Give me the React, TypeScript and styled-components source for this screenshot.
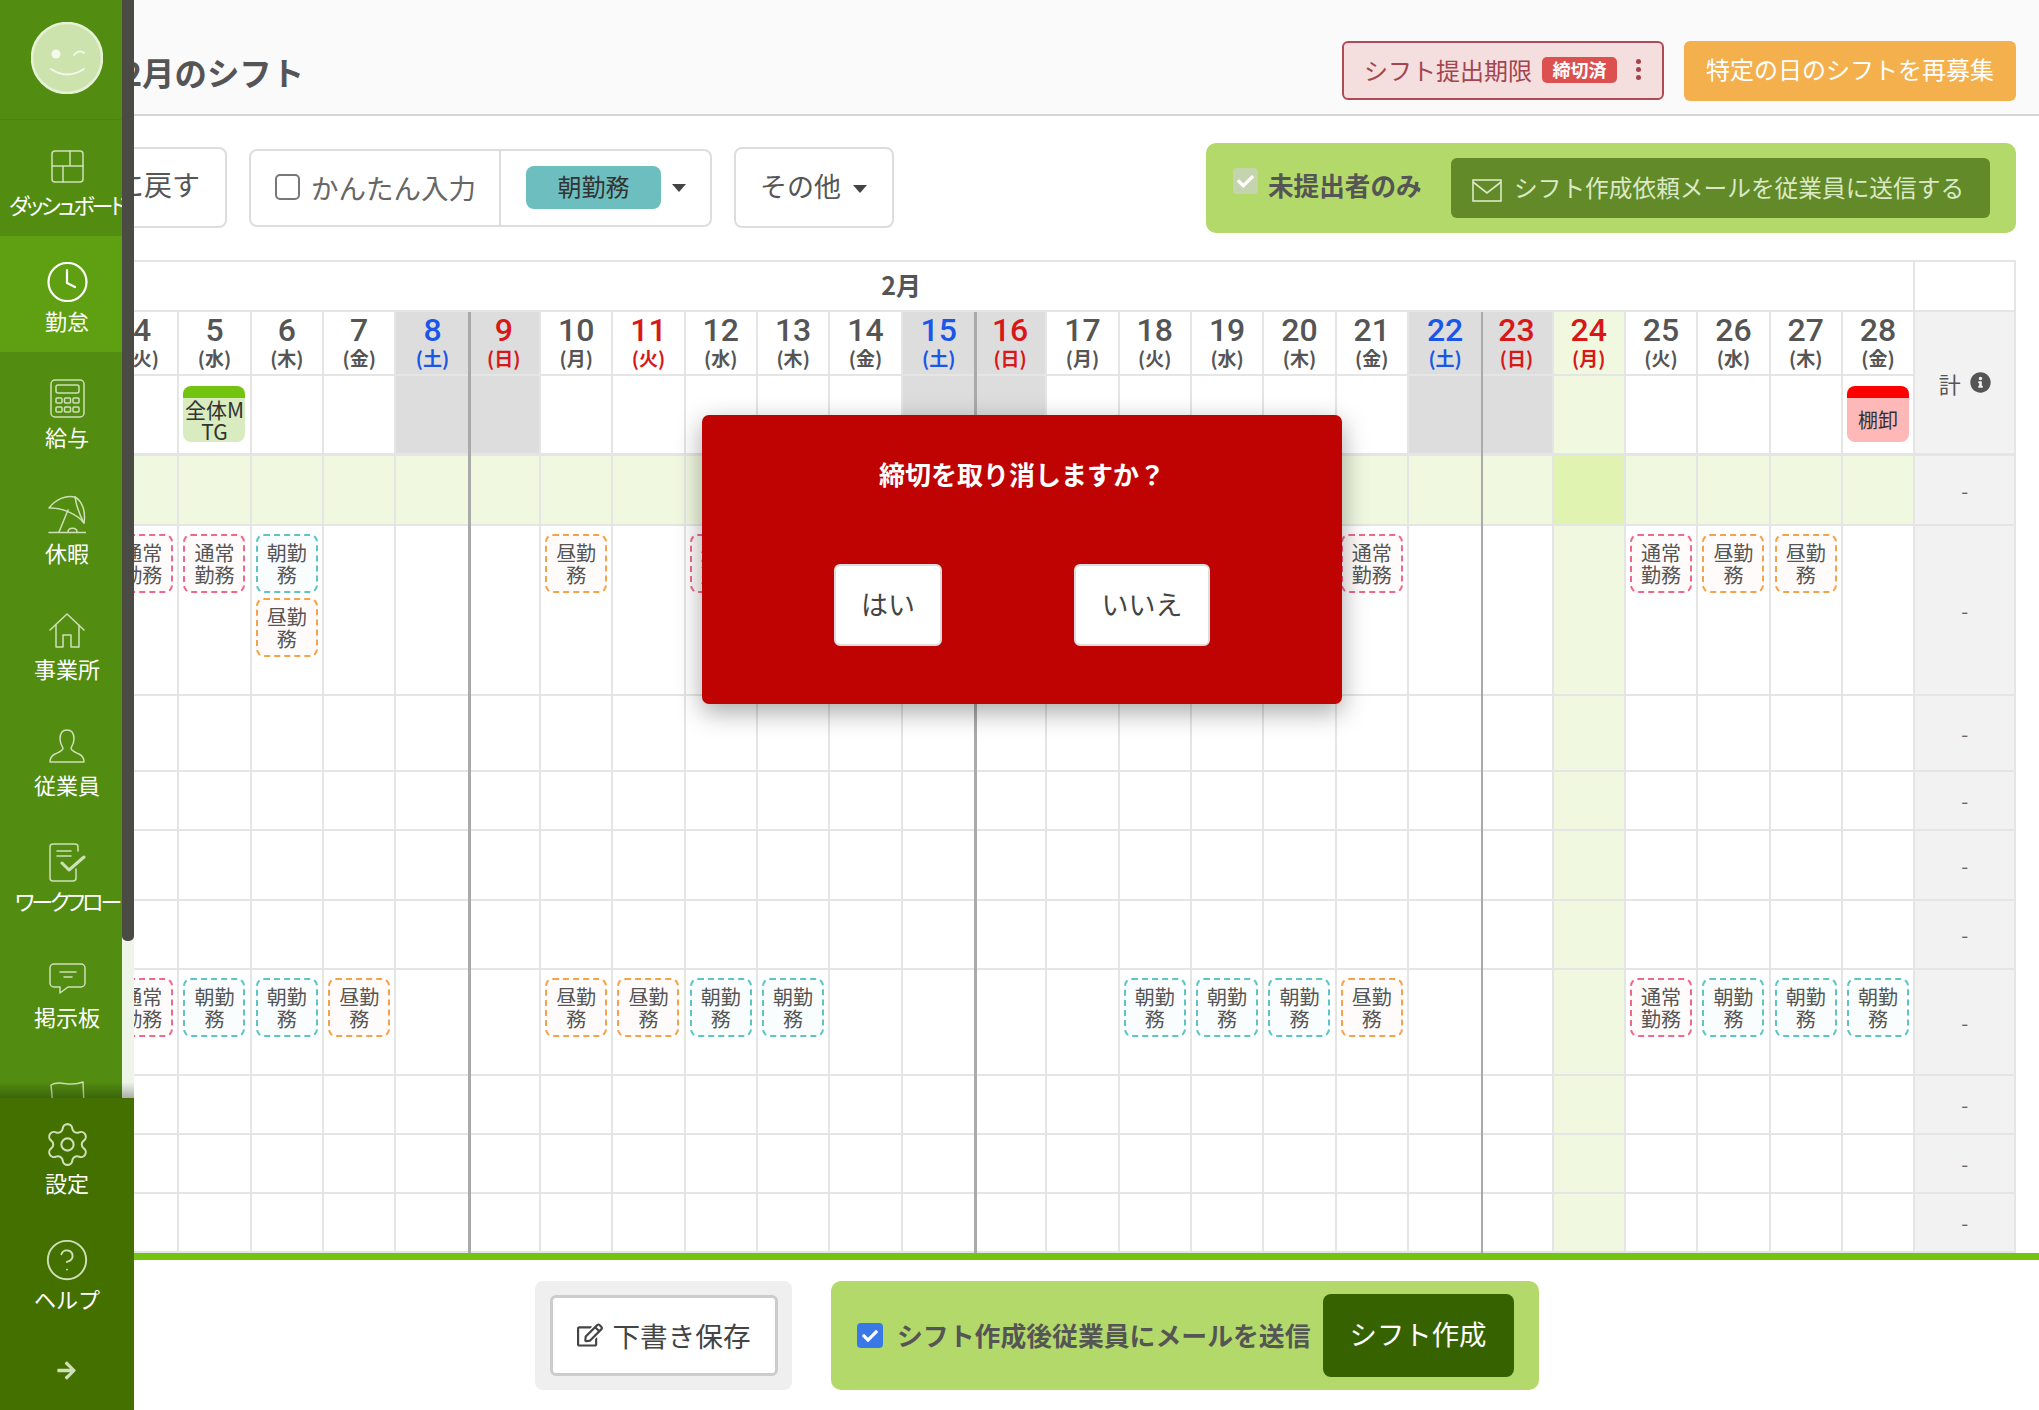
import React from "react";
import styled, { createGlobalStyle } from "styled-components";
import { Settings, CircleHelp } from "lucide-react";
import { FaArrowRight, FaCheck, FaInfoCircle, FaRegEdit } from "react-icons/fa";

const Global = createGlobalStyle`
  html, body { margin: 0; padding: 0; overflow: hidden; background: #fff; }
  * { box-sizing: border-box; }
  body { font-family: "Noto Sans CJK JP", "Liberation Sans", sans-serif; color: #555; }
`;

const Page = styled.div`
  position: relative;
  display: flex;
  width: 2039px;
  height: 1410px;
  overflow: hidden;
`;

/* ---------- sidebar ---------- */
const Sidebar = styled.aside`
  flex: 0 0 134px;
  display: flex;
  flex-direction: column;
  height: 1410px;
  z-index: 3;
`;
const SideScroll = styled.div`
  position: relative;
  height: 1098px;
  overflow: hidden;
`;
const NavColumn = styled.nav`
  width: 134px;
  background: #528c10;
`;
const Track = styled.div`
  position: absolute;
  right: 0;
  top: 0;
  bottom: 0;
  width: 12px;
  background: #eef5e8;
`;
const Thumb = styled.div`
  height: 941px;
  background: #4a4b44;
  border-radius: 0 0 5px 5px;
`;
const LogoBox = styled.div`
  height: 120px;
  padding-top: 22px;
  display: flex;
  justify-content: center;
  border-bottom: 1px solid #4c840e;
`;
const NavItem = styled.div<{ $active?: boolean }>`
  height: 116px;
  padding-top: 26px;
  display: flex;
  flex-direction: column;
  align-items: center;
  background: ${(p) => (p.$active ? "#5fa013" : "transparent")};
  color: ${(p) => (p.$active ? "#fff" : "#cfe0b8")};
`;
const IconBox = styled.div`
  height: 40px;
  width: 100%;
  display: flex;
  align-items: center;
  justify-content: center;
`;
const NavLabel = styled.div<{ $tight?: boolean }>`
  margin-top: 5px;
  height: 26px;
  line-height: 26px;
  font-size: 22px;
  color: #fff;
  white-space: nowrap;
  font-feature-settings: ${(p) => (p.$tight ? '"palt"' : "normal")};
  letter-spacing: ${(p) => (p.$tight ? "-3px" : "0")};
`;
const BottomNav = styled.div`
  position: relative;
  flex: 1;
  background: #447000;
  width: 134px;
  &::before {
    content: "";
    position: absolute;
    left: 0;
    right: 0;
    top: -16px;
    height: 16px;
    background: linear-gradient(to bottom, rgba(0, 0, 0, 0), rgba(0, 0, 0, 0.28));
  }
`;
const ArrowRow = styled.div`
  height: 80px;
  display: flex;
  align-items: center;
  justify-content: center;
  padding-right: 2px;
  color: #cfe0b8;
`;

const Svg = styled.svg`
  display: block;
  fill: none;
  stroke: currentColor;
  stroke-width: 1.5;
  stroke-linejoin: round;
  stroke-linecap: round;
`;

const icons: Record<string, React.ReactNode> = {
  dash: (
    <Svg width="33" height="33" viewBox="0 0 33 33">
      <rect x="1" y="1" width="31" height="31" rx="3" />
      <path d="M1 16H32M19 1V16M12 16V32" />
    </Svg>
  ),
  clock: (
    <Svg width="41" height="40" viewBox="0 0 41 40" style={{ strokeWidth: 2.2 }}>
      <circle cx="20.5" cy="20" r="19" />
      <path d="M20 8V21L28 25" />
    </Svg>
  ),
  calc: (
    <Svg width="35" height="39" viewBox="0 0 35 39">
      <rect x="1" y="1" width="33" height="37" rx="4" />
      <rect x="6" y="6" width="23" height="8" rx="2" />
      <rect x="6" y="19" width="6" height="5" rx="1" />
      <rect x="14.5" y="19" width="6" height="5" rx="1" />
      <rect x="23" y="19" width="6" height="5" rx="1" />
      <rect x="6" y="28" width="6" height="5" rx="1" />
      <rect x="14.5" y="28" width="6" height="5" rx="1" />
      <rect x="23" y="28" width="6" height="5" rx="1" />
    </Svg>
  ),
  umbrella: (
    <Svg width="38" height="39" viewBox="0 0 38 39">
      <path d="M1 13C8 4 18 0 27 2C34 6 38 16 36 28C30 20 14 12 1 13Z" />
      <path d="M27 2C28 8 29 15 36 28M20 15L11 37" />
      <path d="M20 37C20 32 29 32 29 37M1 37.5H38" />
    </Svg>
  ),
  house: (
    <Svg width="36" height="35" viewBox="0 0 36 35">
      <path d="M1 17L18 1L35 17M7 12V34H14V22H22V34H30V12" />
    </Svg>
  ),
  person: (
    <Svg width="36" height="34" viewBox="0 0 36 34">
      <path d="M18 1C12 1 11 6 11 10C11 14 13 17 14 19C14 22 10 23 6 25C2 27 1 30 1 33H35C35 30 34 27 30 25C26 23 22 22 22 19C23 17 25 14 25 10C25 6 24 1 18 1Z" />
    </Svg>
  ),
  flow: (
    <Svg width="38" height="39" viewBox="0 0 38 39">
      <path d="M30 8V4A3 3 0 0 0 27 1H5A3 3 0 0 0 2 4V35A3 3 0 0 0 5 38H25A3 3 0 0 0 28 35V26" />
      <path d="M9 8H23M9 13H23" />
      <path d="M14 20L21 27L36 14" style={{ strokeWidth: 3 }} />
    </Svg>
  ),
  bubble: (
    <Svg width="37" height="31" viewBox="0 0 37 31">
      <path d="M5 1H32A4 4 0 0 1 36 5V20A4 4 0 0 1 32 24H19L11 30V24H5A4 4 0 0 1 1 20V5A4 4 0 0 1 5 1Z" />
      <path d="M11 9H27M15 14H23" />
    </Svg>
  ),
  flag: (
    <Svg width="35" height="30" viewBox="0 0 35 30" style={{ marginTop: 2 }}>
      <path d="M1 5C10 -1 18 8 33 2L34 24C20 29 12 20 3 26Z" />
    </Svg>
  ),
};

const Smile = () => (
  <svg width="72" height="72" viewBox="0 0 72 72">
    <circle cx="36" cy="36" r="35" fill="#cde3ae" stroke="#e6f1d6" strokeWidth="2.5" />
    <circle cx="25" cy="32" r="4.5" fill="#f4f9ec" />
    <path d="M43 33Q48 27 53 31" fill="none" stroke="#f4f9ec" strokeWidth="1.8" strokeLinecap="round" />
    <path d="M20 47Q36 58 53 47" fill="none" stroke="#f4f9ec" strokeWidth="1.8" strokeLinecap="round" />
  </svg>
);

/* ---------- main ---------- */
const Main = styled.main`
  flex: 1;
  min-width: 0;
  height: 1410px;
  display: flex;
  flex-direction: column;
  overflow: hidden;
`;
const Header = styled.header`
  flex: 0 0 116px;
  display: flex;
  align-items: flex-start;
  padding: 41px 23px 0 0;
  background: #fafafa;
  border-bottom: 2px solid #d6d6d6;
`;
const Title = styled.h1`
  margin: 1px auto 0 -11px;
  font-size: 32.4px;
  line-height: 60px;
  font-weight: 700;
  color: #555;
  white-space: nowrap;
`;
const DeadlineButton = styled.div`
  width: 322px;
  height: 59px;
  display: flex;
  align-items: center;
  padding: 0 0 2px 20px;
  background: #f4dede;
  border: 2px solid #b04a55;
  border-radius: 6px;
  font-size: 24px;
  color: #a4444f;
  white-space: nowrap;
`;
const Badge = styled.span`
  width: 75px;
  height: 26px;
  margin-left: 10px;
  background: #dd5050;
  border-radius: 5px;
  color: #fff;
  font-size: 18px;
  font-weight: 700;
  line-height: 25px;
  text-align: center;
`;
const Dots = styled.span`
  margin-left: 19px;
  display: flex;
  flex-direction: column;
  gap: 3px;
  & > i {
    width: 5px;
    height: 5px;
    border-radius: 50%;
    background: #a4444f;
  }
`;
const OrangeButton = styled.div`
  width: 332px;
  height: 60px;
  margin-left: 20px;
  background: #f5b04e;
  border-radius: 6px;
  color: #fff;
  font-size: 24px;
  line-height: 56px;
  text-align: center;
  white-space: nowrap;
`;
const Toolbar = styled.div`
  flex: 0 0 144px;
  display: flex;
  align-items: center;
  padding-right: 23px;
  gap: 22px;
`;
const BackButton = styled.div`
  width: 127px;
  height: 81px;
  margin: 0 0 1px -34px;
  padding-right: 25px;
  border: 2px solid #ddd;
  border-radius: 8px;
  font-size: 28px;
  line-height: 71px;
  text-align: right;
  color: #555;
  white-space: nowrap;
`;
const InputGroup = styled.div`
  width: 463px;
  height: 78px;
  display: flex;
  align-items: center;
  border: 2px solid #ddd;
  border-radius: 8px;
`;
const EasyInput = styled.div`
  width: 250px;
  height: 100%;
  display: flex;
  align-items: center;
  padding: 0 0 2px 24px;
  gap: 11px;
  border-right: 2px solid #ddd;
  font-size: 27.5px;
  color: #666;
  white-space: nowrap;
`;
const EmptyCheck = styled.span`
  width: 25px;
  height: 26px;
  border: 2px solid #777;
  border-radius: 5px;
  background: #fff;
`;
const ShiftTag = styled.span`
  width: 135px;
  height: 43px;
  margin: 0 0 1px 25px;
  background: #6dbfbf;
  border-radius: 8px;
  color: #333;
  font-size: 24px;
  line-height: 39px;
  text-align: center;
`;
const Caret = styled.span<{ $left: number; $top?: number }>`
  margin-left: ${(p) => p.$left}px;
  margin-top: ${(p) => p.$top ?? 0}px;
  width: 0;
  height: 0;
  border-left: 7px solid transparent;
  border-right: 7px solid transparent;
  border-top: 8px solid #444;
`;
const OtherButton = styled.div`
  width: 160px;
  height: 81px;
  margin-bottom: 1px;
  display: flex;
  align-items: center;
  padding: 0 0 4px 24px;
  border: 2px solid #ddd;
  border-radius: 8px;
  font-size: 27px;
  color: #555;
  white-space: nowrap;
`;
const GreenPanel = styled.div`
  width: 810px;
  height: 90px;
  margin-left: auto;
  display: flex;
  align-items: center;
  padding: 0 26px 0 27px;
  background: #b2d96a;
  border-radius: 10px;
`;
const DisabledCheck = styled.span`
  width: 25px;
  height: 26px;
  margin-top: -14px;
  display: flex;
  align-items: center;
  justify-content: center;
  background: #c4d4ae;
  border-radius: 4px;
  color: #fff;
`;
const PanelLabel = styled.span`
  margin: -8px 0 0 10px;
  font-size: 25.6px;
  font-weight: 700;
  color: #555;
  white-space: nowrap;
`;
const MailButton = styled.div`
  width: 539px;
  height: 60px;
  margin-left: auto;
  display: flex;
  align-items: center;
  padding: 0 0 2px 21px;
  gap: 12px;
  background: #628a28;
  border-radius: 6px;
  color: #dbe9c6;
  font-size: 23.7px;
  white-space: nowrap;
`;
const MailIcon = styled.svg`
  margin-top: 6px;
  flex: none;
  fill: none;
  stroke: #dbe9c6;
  stroke-width: 1.6;
`;

/* ---------- calendar ---------- */
const Calendar = styled.div`
  flex: 0 0 993px;
  margin-left: -27px;
  width: 1909px;
  display: grid;
  grid-template-columns: repeat(25, 72.33px) 101px;
  grid-template-rows: 50px 64px 80px 70px 170px 76px 59px 70px 69px 106px 59px 59px 59px;
  border-top: 2px solid #e5e5e5;
`;
const MonthCell = styled.div`
  grid-column: span 25;
  padding-right: 218px;
  border-bottom: 2px solid #e5e5e5;
  border-right: 2px solid #e5e5e5;
  font-size: 25px;
  font-weight: 700;
  line-height: 45px;
  text-align: center;
  color: #555;
`;
const BlankTotal = styled.div`
  border-bottom: 2px solid #e5e5e5;
  border-right: 2px solid #e5e5e5;
`;
const Cell = styled.div<{ $bg?: string; $heavy?: boolean; $thick?: boolean }>`
  position: relative;
  display: flex;
  flex-direction: column;
  align-items: center;
  padding-top: 8px;
  gap: 5px;
  background: ${(p) => p.$bg ?? "#fff"};
  border-bottom: ${(p) => (p.$thick ? 3 : 2)}px solid #e5e5e5;
  border-right: ${(p) => (p.$heavy ? "0" : "2px solid #e5e5e5")};
  &::after {
    content: "";
    display: ${(p) => (p.$heavy ? "block" : "none")};
    position: absolute;
    top: 0;
    bottom: ${(p) => (p.$thick ? -3 : -2)}px;
    right: -2px;
    width: 2.5px;
    background: #aaa;
    z-index: 1;
  }
`;
const DayCell = styled(Cell)<{ $color: string }>`
  padding-top: 0;
  gap: 0;
  color: ${(p) => p.$color};
`;
const DayNumber = styled.div`
  height: 33px;
  margin-top: 2px;
  font-family: Roboto, "Liberation Sans", sans-serif;
  font-size: 32px;
  font-weight: 500;
  line-height: 33px;
`;
const DayName = styled.div`
  font-size: 19px;
  font-weight: 700;
  line-height: 21px;
  white-space: nowrap;
`;
const Chip = styled.div<{ $kind: "pink" | "teal" | "orange" }>`
  width: 62px;
  height: 59px;
  flex: none;
  display: flex;
  align-items: center;
  justify-content: center;
  padding: 0 9px;
  border: 2px dashed
    ${(p) => (p.$kind === "pink" ? "#ee6a8c" : p.$kind === "teal" ? "#5fc4c4" : "#f5a34a")};
  border-radius: 8px;
  background: ${(p) => (p.$kind === "teal" ? "#f9fdfd" : "#fffbfa")};
  font-size: 20px;
  line-height: 22px;
  color: #555;
  text-align: center;
`;
const EventCard = styled.div<{ $band: string; $bg: string; $size: number }>`
  width: 62px;
  height: 56px;
  margin-top: 2px;
  display: flex;
  align-items: center;
  justify-content: center;
  border-top: 12px solid ${(p) => p.$band};
  border-radius: 8px;
  background: ${(p) => p.$bg};
  font-size: ${(p) => p.$size}px;
  line-height: 22px;
  color: #333;
  text-align: center;
  word-break: break-all;
`;
const TotalHead = styled.div`
  grid-row: span 2;
  display: flex;
  align-items: center;
  justify-content: center;
  gap: 9px;
  background: #f2f2f2;
  border-bottom: 3px solid #e5e5e5;
  border-right: 2px solid #e5e5e5;
  font-size: 22px;
  color: #555;
`;
const TotalCell = styled.div`
  display: flex;
  align-items: center;
  justify-content: center;
  background: #f2f2f2;
  border-bottom: 2px solid #e5e5e5;
  border-right: 2px solid #e5e5e5;
  font-size: 20px;
  color: #666;
`;

/* ---------- footer ---------- */
const Footer = styled.footer`
  flex: 1;
  display: flex;
  align-items: flex-start;
  gap: 39px;
  padding-left: 401px;
  border-top: 7px solid #72c410;
  padding-top: 21px;
`;
const DraftPanel = styled.div`
  width: 257px;
  height: 109px;
  display: flex;
  align-items: center;
  justify-content: center;
  background: #efefef;
  border-radius: 8px;
`;
const DraftButton = styled.div`
  width: 228px;
  height: 81px;
  display: flex;
  align-items: center;
  justify-content: center;
  gap: 10px;
  padding-bottom: 2px;
  background: #fff;
  border: 3px solid #ccc;
  border-radius: 6px;
  font-size: 27.6px;
  color: #444;
  white-space: nowrap;
`;
const SendPanel = styled.div`
  width: 708px;
  height: 109px;
  display: flex;
  align-items: center;
  padding-left: 26px;
  background: #b2d96a;
  border-radius: 10px;
`;
const BlueCheck = styled.span`
  width: 26px;
  height: 25px;
  display: flex;
  align-items: center;
  justify-content: center;
  background: #3b78e7;
  border-radius: 4px;
  color: #fff;
`;
const SendLabel = styled.span`
  margin: 0 0 2px 14px;
  font-size: 25.85px;
  font-weight: 700;
  color: #555;
  white-space: nowrap;
`;
const CreateButton = styled.div`
  width: 191px;
  height: 83px;
  margin-left: 12px;
  background: #366300;
  border-radius: 8px;
  color: #fff;
  font-size: 27.4px;
  line-height: 79px;
  text-align: center;
  white-space: nowrap;
`;

/* ---------- modal ---------- */
const Modal = styled.div`
  position: absolute;
  left: 702px;
  top: 415px;
  width: 640px;
  height: 289px;
  z-index: 2;
  padding-top: 39px;
  background: #bf0303;
  border-radius: 7px;
  box-shadow: 0 8px 26px rgba(0, 0, 0, 0.35);
  text-align: center;
`;
const ModalTitle = styled.div`
  height: 40px;
  font-size: 26px;
  font-weight: 700;
  line-height: 40px;
  color: #fff;
`;
const ModalButtons = styled.div`
  margin-top: 70px;
  display: flex;
  justify-content: center;
  gap: 132px;
`;
const ModalButton = styled.div<{ $w: number }>`
  width: ${(p) => p.$w}px;
  height: 82px;
  background: #fff;
  border: 2px solid #ddd;
  border-radius: 6px;
  font-size: 27px;
  line-height: 76px;
  color: #444;
`;

/* ---------- data ---------- */
type Kind = "pink" | "teal" | "orange";
const WEEK = ["月", "火", "水", "木", "金", "土", "日"];
const days = Array.from({ length: 25 }, (_, i) => {
  const d = i + 4;
  return { d, w: WEEK[(d + 4) % 7] };
});
const LABEL: Record<Kind, string> = { pink: "通常勤務", teal: "朝勤務", orange: "昼勤務" };
const row1: Record<number, Kind[]> = {
  4: ["pink"], 5: ["pink"], 6: ["teal", "orange"], 10: ["orange"], 12: ["pink"],
  21: ["pink"], 25: ["pink"], 26: ["orange"], 27: ["orange"],
};
const row7: Record<number, Kind[]> = {
  4: ["pink"], 5: ["teal"], 6: ["teal"], 7: ["orange"], 10: ["orange"], 11: ["orange"],
  12: ["teal"], 13: ["teal"], 18: ["teal"], 19: ["teal"], 20: ["teal"], 21: ["orange"],
  25: ["pink"], 26: ["teal"], 27: ["teal"], 28: ["teal"],
};
const isSat = (w: string) => w === "土";
const isOff = (w: string) => w === "土" || w === "日";
const dayColor = (d: number, w: string) => {
  if (isSat(w)) return "#1a56e8";
  if (w === "日" || d === 11 || d === 24) return "#d81818";
  return "#555";
};
const TODAY = "#f0f8df";
const rowsBelow: Array<Record<number, Kind[]>> = [row1, {}, {}, {}, {}, row7, {}, {}, {}];

const Nav = ({ icon, label, active, tight }: { icon: React.ReactNode; label?: string; active?: boolean; tight?: boolean }) => (
  <NavItem $active={active}>
    <IconBox>{icon}</IconBox>
    {label && <NavLabel $tight={tight}>{label}</NavLabel>}
  </NavItem>
);

export default function App() {
  return (
    <Page>
      <Global />
      <Sidebar>
        <SideScroll>
          <NavColumn>
            <LogoBox><Smile /></LogoBox>
            <Nav icon={icons.dash} label="ダッシュボード" tight />
            <Nav icon={icons.clock} label="勤怠" active />
            <Nav icon={icons.calc} label="給与" />
            <Nav icon={icons.umbrella} label="休暇" />
            <Nav icon={icons.house} label="事業所" />
            <Nav icon={icons.person} label="従業員" />
            <Nav icon={icons.flow} label="ワークフロー" tight />
            <Nav icon={icons.bubble} label="掲示板" />
            <Nav icon={icons.flag} />
          </NavColumn>
          <Track><Thumb /></Track>
        </SideScroll>
        <BottomNav>
          <Nav icon={<Settings size={49} strokeWidth={1} />} label="設定" />
          <Nav icon={<CircleHelp size={46} strokeWidth={1} />} label="ヘルプ" />
          <ArrowRow><FaArrowRight size={21} /></ArrowRow>
        </BottomNav>
      </Sidebar>

      <Main>
        <Header>
          <Title>2月のシフト</Title>
          <DeadlineButton>
            シフト提出期限
            <Badge>締切済</Badge>
            <Dots><i /><i /><i /></Dots>
          </DeadlineButton>
          <OrangeButton>特定の日のシフトを再募集</OrangeButton>
        </Header>

        <Toolbar>
          <BackButton>に戻す</BackButton>
          <InputGroup>
            <EasyInput><EmptyCheck />かんたん入力</EasyInput>
            <ShiftTag>朝勤務</ShiftTag>
            <Caret $left={11} />
          </InputGroup>
          <OtherButton>その他<Caret $left={12} $top={6} /></OtherButton>
          <GreenPanel>
            <DisabledCheck><FaCheck size={17} /></DisabledCheck>
            <PanelLabel>未提出者のみ</PanelLabel>
            <MailButton>
              <MailIcon width="30" height="23" viewBox="0 0 30 23">
                <rect x="1" y="1" width="28" height="21" />
                <path d="M1 3L15 14L29 3" />
              </MailIcon>
              シフト作成依頼メールを従業員に送信する
            </MailButton>
          </GreenPanel>
        </Toolbar>

        <Calendar>
          <MonthCell>2月</MonthCell>
          <BlankTotal />
          {days.map(({ d, w }) => (
            <DayCell
              key={d}
              $color={dayColor(d, w)}
              $bg={isOff(w) ? "#ddd" : d === 24 ? TODAY : "#fff"}
              $heavy={isSat(w)}
            >
              <DayNumber>{d}</DayNumber>
              <DayName>({w})</DayName>
            </DayCell>
          ))}
          <TotalHead>計<FaInfoCircle size={21} /></TotalHead>
          {days.map(({ d, w }) => (
            <Cell
              key={d}
              $thick
              $bg={isOff(w) ? "#ddd" : d === 24 ? TODAY : "#fff"}
              $heavy={isSat(w)}
            >
              {d === 5 && <EventCard $band="#72c410" $bg="#d8ecc0" $size={21}>全体MTG</EventCard>}
              {d === 28 && <EventCard $band="#ff0000" $bg="#ffb8b8" $size={20}>棚卸</EventCard>}
            </Cell>
          ))}
          {days.map(({ d, w }) => (
            <Cell key={d} $bg={d === 24 ? "#e0f3b0" : TODAY} $heavy={isSat(w)} />
          ))}
          <TotalCell>-</TotalCell>
          {rowsBelow.map((row, r) => (
            <React.Fragment key={r}>
              {days.map(({ d, w }) => (
                <Cell key={d} $bg={d === 24 ? TODAY : "#fff"} $heavy={isSat(w)}>
                  {(row[d] ?? []).map((k, i) => (
                    <Chip key={i} $kind={k}>{LABEL[k]}</Chip>
                  ))}
                </Cell>
              ))}
              <TotalCell>-</TotalCell>
            </React.Fragment>
          ))}
        </Calendar>

        <Footer>
          <DraftPanel>
            <DraftButton><FaRegEdit size={26} />下書き保存</DraftButton>
          </DraftPanel>
          <SendPanel>
            <BlueCheck><FaCheck size={16} /></BlueCheck>
            <SendLabel>シフト作成後従業員にメールを送信</SendLabel>
            <CreateButton>シフト作成</CreateButton>
          </SendPanel>
        </Footer>
      </Main>

      <Modal>
        <ModalTitle>締切を取り消しますか？</ModalTitle>
        <ModalButtons>
          <ModalButton $w={108}>はい</ModalButton>
          <ModalButton $w={136}>いいえ</ModalButton>
        </ModalButtons>
      </Modal>
    </Page>
  );
}
